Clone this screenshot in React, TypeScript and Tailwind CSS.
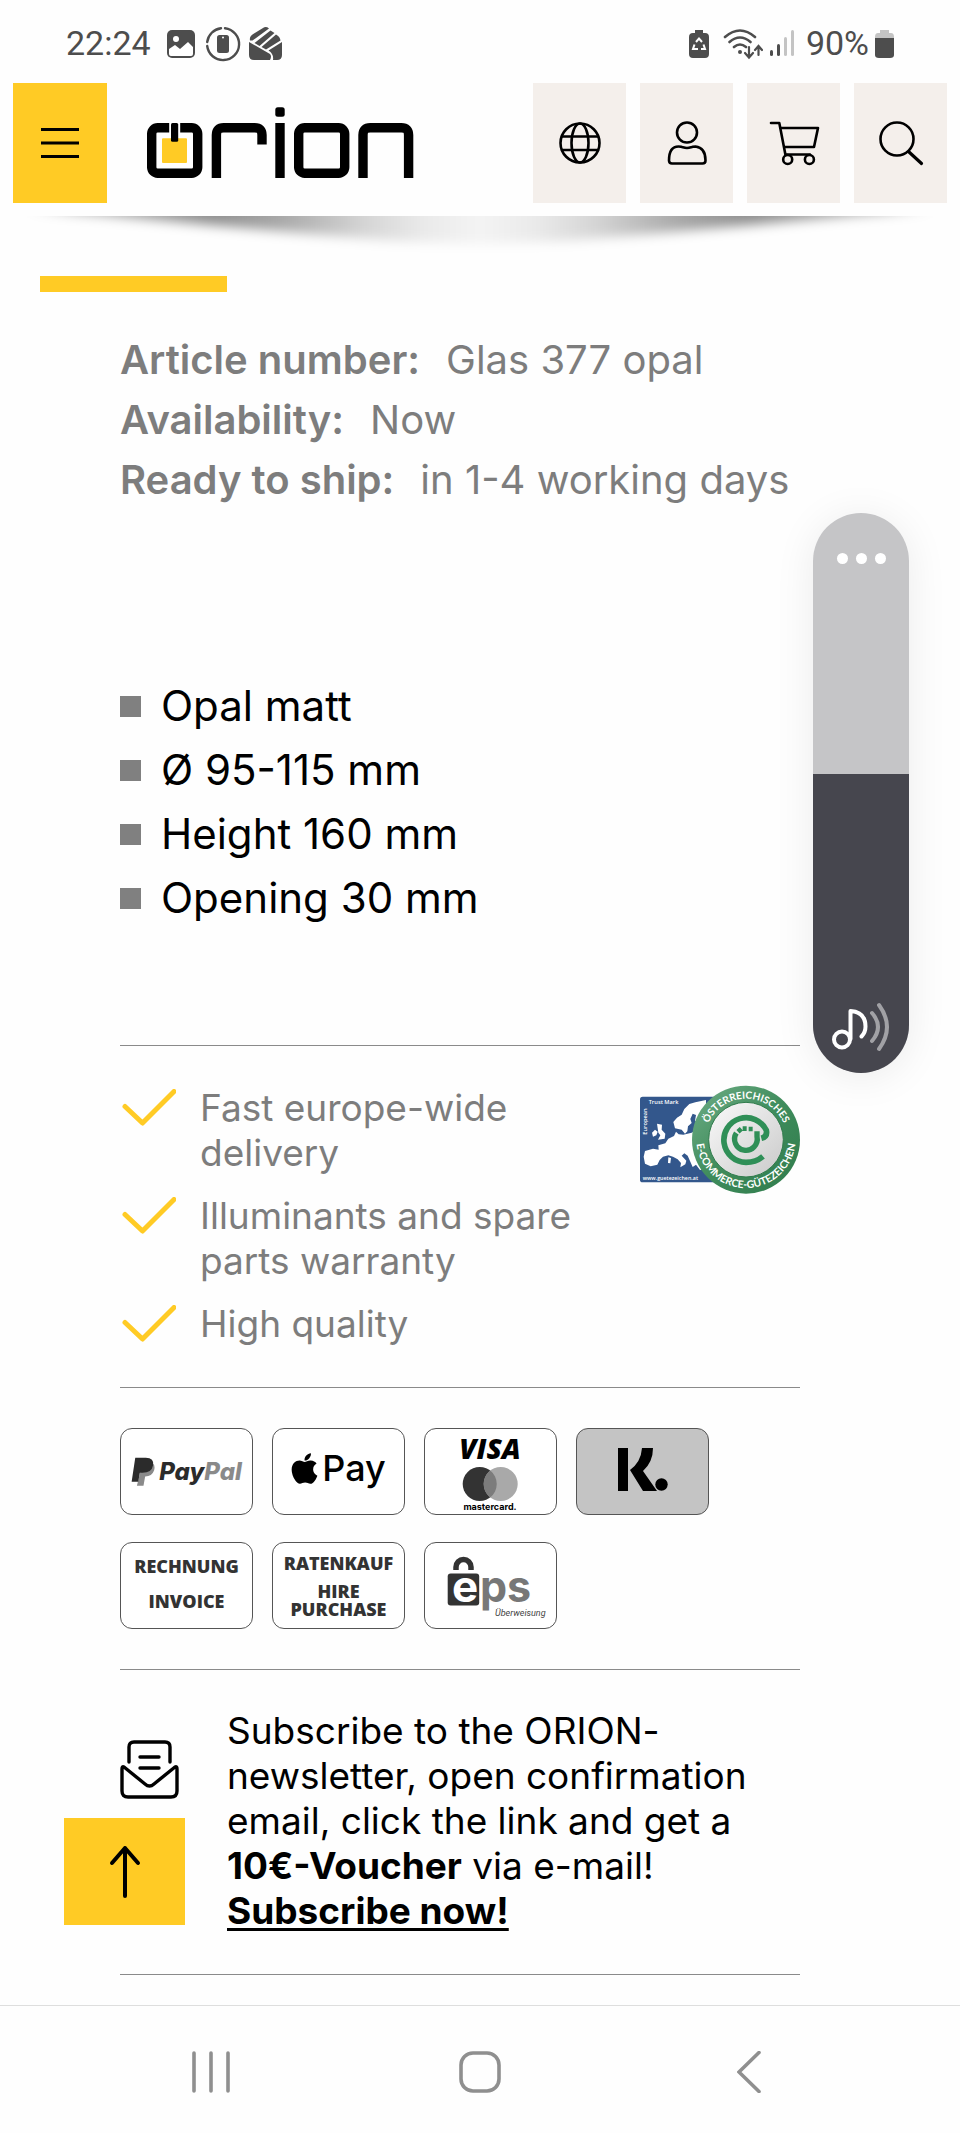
import type { ReactNode } from 'react';
import { FaApple } from 'react-icons/fa';

const articleInfo = [
  { label: 'Article number:', value: 'Glas 377 opal' },
  { label: 'Availability:', value: 'Now' },
  { label: 'Ready to ship:', value: 'in 1-4 working days' },
];

const features = ['Opal matt', 'Ø 95-115 mm', 'Height 160 mm', 'Opening 30 mm'];

const benefits = ['Fast europe-wide delivery', 'Illuminants and spare parts warranty', 'High quality'];

function StatusBar() {
  return (
    <div className="flex h-[83px] items-center justify-between pt-1 pr-[66px] pl-[66px] font-[Roboto] text-[34px] text-[#4d4d4d]">
      <div className="flex items-center gap-2">
        <span className="mr-2">22:24</span>
        <svg width="28" height="28" viewBox="0 0 28 28">
          <rect width="28" height="28" rx="5" fill="#4d4d4d" />
          <circle cx="9" cy="9" r="3" fill="#fff" />
          <path d="M2 19l6-4 5 4 8-7 5 5v7a2 2 0 0 1-2 2H4a2 2 0 0 1-2-2z" fill="#fff" />
        </svg>
        <svg className="ml-0.5" width="36" height="36" viewBox="0 0 36 36" fill="none" stroke="#4d4d4d" strokeWidth="2.4" strokeLinecap="round">
          <path d="M20 2.200A16 16 0 1 1 2.200 20M2.200 16A16 16 0 0 1 16 2.200" />
          <rect x="12" y="9" width="12" height="18" rx="2.500" fill="#4d4d4d" stroke="none" />
          <circle cx="18" cy="11.500" r="1" fill="#fff" stroke="none" />
        </svg>
        <svg width="33" height="33" viewBox="0 0 33 33" fill="#4d4d4d">
          <path d="M1 13.500Q0 9 5 6.500L14 1q3-2 6 .5L3.500 13.500zM5.500 16 21.500 3.500l4 2.500L10.500 19zM12.500 20 27 7.500q4 2 4.500 6L17 22.500z" />
          <path d="M0 15 21 27q2 2 0 6H5q-5 0-5-5zM19.500 23.500 33 15v13q0 5-5 5h-4q1-6-4.500-9.500z" />
        </svg>
      </div>
      <div className="flex items-center">
        <svg width="20" height="28" viewBox="0 0 20 28">
          <path d="M6 0h8v3h2q4 0 4 4v17q0 4-4 4H4q-4 0-4-4V7q0-4 4-4h2z" fill="#4d4d4d" />
          <path d="M7 12l3-3.500 3 3.500M14.500 14.500l1.500 4.500h-4M9 19H4l1.500-4.500" fill="none" stroke="#fff" strokeWidth="2" />
        </svg>
        <svg className="ml-[14px]" width="40" height="32" viewBox="0 0 40 32" fill="none" stroke="#4d4d4d" strokeWidth="2.600" strokeLinecap="round">
          <path d="M2 9q15-13 30 0M6.500 14q10.500-9 21 0M11 19q6-5 12 0" />
          <circle cx="17" cy="24" r="2" fill="#4d4d4d" stroke="none" />
          <path d="M26 19v10m-4-4 4 4.500 4-4.500M35.500 27V18m-3.500 4 3.500-4 3.500 4" strokeWidth="2.200" />
        </svg>
        <svg className="ml-[7px]" width="24" height="28" viewBox="0 0 24 28">
          <rect x="0" y="20" width="3" height="6" rx="1.500" fill="#4d4d4d" />
          <rect x="7" y="14" width="3" height="12" rx="1.500" fill="#4d4d4d" />
          <rect x="14" y="7" width="3" height="19" rx="1.500" fill="#c4c4c4" />
          <rect x="21" y="0" width="3" height="26" rx="1.500" fill="#c4c4c4" />
        </svg>
        <span className="ml-3">90%</span>
        <svg className="ml-[6px]" width="19" height="28" viewBox="0 0 19 28">
          <path d="M5 0h9v3h2q3 0 3 4v3H0V7q0-4 3-4h2z" fill="#c4c4c4" />
          <path d="M0 8h19v17q0 3-4 3H4q-4 0-4-3z" fill="#4d4d4d" />
        </svg>
      </div>
    </div>
  );
}

function HeaderButton({ label, children }: { label: string; children: ReactNode }) {
  return (
    <button aria-label={label} className="flex h-[120px] w-[93px] items-center justify-center bg-[#f4efeb]">
      <svg width="56" height="56" viewBox="0 0 56 56" fill="none" stroke="#000" strokeWidth="2.600" strokeLinecap="round" strokeLinejoin="round">
        {children}
      </svg>
    </button>
  );
}

function Logo() {
  return (
    <svg width="267" height="71" viewBox="147 107 267 71" fill="none" stroke="#000" strokeWidth="9.400" role="img" aria-label="orion">
      <rect x="151.700" y="127.700" width="46" height="45.600" rx="6" />
      <path d="M216.400 178V135q0-7.300 7.300-7.300h31q7.300 0 7.300 7.300v9.500" />
      <path d="M280 123v55" />
      <rect x="275.300" y="107.300" width="9.400" height="9.400" rx="2.500" fill="#000" stroke="none" />
      <rect x="298.700" y="127.700" width="46" height="45.600" rx="6" />
      <path d="M363 178V135q0-7.300 7.300-7.300h31q7.300 0 7.300 7.300v43" />
      <rect x="169.200" y="122" width="11" height="18" fill="#fff" stroke="none" />
      <rect x="162" y="138.300" width="25" height="24.700" rx="1" fill="#ffcb25" stroke="none" />
      <rect x="171" y="123" width="7.200" height="18.700" rx="1.500" fill="#000" stroke="none" />
    </svg>
  );
}

function Header() {
  return (
    <header className="relative flex items-center px-[13px] pb-[13px]">
      <button aria-label="Menu" className="flex h-[120px] w-[94px] items-center justify-center bg-[#ffcb25]">
        <svg width="38" height="30" viewBox="0 0 38 30" stroke="#000" strokeWidth="3">
          <path d="M0 1.500h38M0 15h38M0 28.500h38" />
        </svg>
      </button>
      <a href="#" className="ml-10 pb-0.5">
        <Logo />
      </a>
      <div className="ml-auto flex gap-[14px]">
        <HeaderButton label="Language">
          <circle cx="28" cy="28" r="19.500" />
          <ellipse cx="28" cy="28" rx="8.500" ry="19.500" />
          <path d="M10 21.500h36M10 35h36" />
        </HeaderButton>
        <HeaderButton label="Account">
          <circle cx="28" cy="17.500" r="10" />
          <path d="M13 48.500q-3 0-3-3 0-14 9.500-14 3 0 4.500.8 4 1.400 8 0 1.500-.8 4.500-.8 10 1 10 14 0 3-3 3z" />
        </HeaderButton>
        <HeaderButton label="Cart">
          <path d="M5 8h8.300L19.500 40" />
          <path d="M14.500 13H52l-4 19H18.500M20 39.500h24" />
          <circle cx="21.700" cy="44.500" r="4.500" />
          <circle cx="43.400" cy="44.500" r="4.500" />
        </HeaderButton>
        <HeaderButton label="Search">
          <circle cx="24" cy="24" r="16.500" />
          <path d="M36 37l12.500 11.500" strokeWidth="3.200" />
        </HeaderButton>
      </div>
      {/* Curved drop shadow under the header */}
      <svg className="absolute top-full left-0 w-full" height="50" viewBox="0 0 960 50" preserveAspectRatio="none">
        <defs>
          <linearGradient id="shade" gradientUnits="userSpaceOnUse" x1="0" x2="960" y1="0" y2="0">
            <stop offset="0.030" stopColor="#000" stopOpacity="0" />
            <stop offset="0.080" stopColor="#000" stopOpacity="0.300" />
            <stop offset="0.220" stopColor="#000" stopOpacity="0.440" />
            <stop offset="0.290" stopColor="#000" stopOpacity="0.340" />
            <stop offset="0.380" stopColor="#000" stopOpacity="0.160" />
            <stop offset="0.440" stopColor="#000" stopOpacity="0.080" />
            <stop offset="0.500" stopColor="#000" stopOpacity="0.040" />
            <stop offset="0.560" stopColor="#000" stopOpacity="0.080" />
            <stop offset="0.620" stopColor="#000" stopOpacity="0.160" />
            <stop offset="0.710" stopColor="#000" stopOpacity="0.340" />
            <stop offset="0.780" stopColor="#000" stopOpacity="0.440" />
            <stop offset="0.920" stopColor="#000" stopOpacity="0.300" />
            <stop offset="0.970" stopColor="#000" stopOpacity="0" />
          </linearGradient>
          <filter id="soft" x="0" y="-1" width="1" height="3">
            <feGaussianBlur stdDeviation="8 6" />
          </filter>
        </defs>
        <path d="M20 -16 20 -6 100 -1 200 8 300 17 400 25 480 28 560 25 660 17 760 8 860 -1 940 -6 940 -16z" fill="url(#shade)" filter="url(#soft)" />
      </svg>
    </header>
  );
}

function VolumeSlider() {
  return (
    <div className="absolute top-[513px] right-[51px] flex h-[560px] w-24 flex-col overflow-hidden rounded-full bg-[#c5c5c7] shadow-[0_4px_40px_rgba(0,0,0,0.08)]">
      <div className="flex h-[261px] justify-center gap-2 pt-10">
        <span className="size-[11px] rounded-full bg-white" />
        <span className="size-[11px] rounded-full bg-white" />
        <span className="size-[11px] rounded-full bg-white" />
      </div>
      <div className="flex flex-1 items-end justify-center bg-[#46464e] pb-5">
        <svg width="60" height="52" viewBox="0 0 60 52" fill="none" stroke="#fff" strokeWidth="4" strokeLinecap="round">
          <ellipse cx="11" cy="38.500" rx="8" ry="8" />
          <path d="M19.500 38V10q15 1 15 15.500 0 6-4 10" strokeLinejoin="round" />
          <path d="M41 12q12 14 0 28M48 4q16 22 0 44" stroke="#a1a1a5" />
        </svg>
      </div>
      <input type="range" aria-label="Volume" defaultValue={54} className="absolute inset-0 h-full w-full opacity-0 [writing-mode:vertical-lr]" />
    </div>
  );
}

function TrustBadge() {
  return (
    <svg className="shrink-0" width="160" height="110" viewBox="60 47 480 330" role="img" aria-label="Trust mark">
      <defs>
        <linearGradient id="ring" x1="0" y1="0" x2="1" y2="1">
          <stop offset="0" stopColor="#6fae86" />
          <stop offset="0.500" stopColor="#3f8c5c" />
          <stop offset="1" stopColor="#2f7b4b" />
        </linearGradient>
        <linearGradient id="disc" x1="0" y1="0" x2="1" y2="1">
          <stop offset="0" stopColor="#fafafa" />
          <stop offset="1" stopColor="#c9c9c9" />
        </linearGradient>
        <path id="arcTop" d="M255 211A123 123 0 0 1 501 211" />
        <path id="arcBottom" d="M230 190A149 149 0 1 0 526 190" />
      </defs>
      <rect x="60" y="82" width="260" height="257" rx="8" fill="#33578c" />
      <g fill="#fff">
        <path d="M185 181 165 177 160 158 171 145 185 136 193 119 208 104 226 99 258 92 258 170 238 176 238 163 225 154 228 137 218 133 211 149 215 161 204 171 202 186 195 193z" />
        <path d="M75 245 99 238 116 241 115 228 136 222 145 208 162 200 168 187 176 195 190 196 215 190 238 176 262 178 262 300 240 302 228 286 218 293 210 275 203 259 193 252 185 259 199 274 196 285 181 294 183 281 173 270 159 262 145 258 129 262 119 272 112 286 92 291 75 283 71 262z" />
        <path d="M111 163 126 166 125 181 136 193 134 208 114 211 121 198 115 190zM105 181 113 187 109 198 99 202 96 190zM145 264 153 266 151 282 144 281z" />
        <text x="86" y="105" fontFamily="Open Sans" fontWeight="600" fontSize="17">Trust Mark</text>
        <text transform="translate(80 196) rotate(-90)" fontFamily="Open Sans" fontWeight="600" fontSize="17">European</text>
        <text x="68" y="333" fontFamily="Open Sans" fontWeight="600" fontSize="16">www.guetezeichen.at</text>
      </g>
      <circle cx="378" cy="211" r="162" fill="url(#ring)" />
      <circle cx="378" cy="211" r="112" fill="url(#disc)" stroke="#2f7b4b" strokeWidth="3" />
      <g fontFamily="Lato" fontWeight="700" fill="#fff">
        <text fontSize="30">
          <textPath href="#arcTop" startOffset="50%" textAnchor="middle">ÖSTERREICHISCHES</textPath>
        </text>
        <text fontSize="31">
          <textPath href="#arcBottom" startOffset="50%" textAnchor="middle">E-COMMERCE-GÜTEZEICHEN</textPath>
        </text>
      </g>
      <g fill="none" stroke="#2f8f57">
        <path d="M429 261Q408 279 378 279A67 67 0 1 1 439 183Q443 202 424 207" strokeWidth="17" />
        <path d="M349 191A34 34 0 1 0 411 202V186" strokeWidth="16" />
        <path d="M354 187l10-9M368 178h12M386 179h12" strokeWidth="14" />
      </g>
    </svg>
  );
}

function PaymentCard({ className = 'bg-white', children }: { className?: string; children: ReactNode }) {
  return <li className={`flex h-[87px] w-[133px] items-center justify-center rounded-xl border border-[#555] ${className}`}>{children}</li>;
}

function Payments() {
  return (
    <ul className="flex flex-wrap gap-x-[19px] gap-y-[27px] border-t border-[#8a8a8a] py-10 text-[#333]">
      <PaymentCard className="gap-1 bg-white">
        <svg width="24" height="29" viewBox="65 141 71 88" aria-hidden="true">
          <path d="M100 157h28q11 10 6 25-6 18-27 18l-5 28H82z" fill="#8a8a8a" />
          <path d="M77 143h32q26 0 22 23-4 23-32 23h-8l-5 27H66z" fill="#2b2b2b" />
        </svg>
        <span className="font-[Inter] text-[24px] leading-none font-extrabold text-[#2b2b2b] italic">
          Pay<span className="text-[#8a8a8a]">Pal</span>
        </span>
      </PaymentCard>
      <PaymentCard className="gap-1 bg-white pb-[7px] text-black">
        <FaApple className="h-[35px] w-[27px]" />
        <span className="font-[Inter] text-[36px] leading-none font-medium">Pay</span>
      </PaymentCard>
      <PaymentCard>
        <svg width="131" height="85" viewBox="1 1 131 85">
          <text x="66" y="31" textAnchor="middle" fontFamily="Open Sans" fontWeight="800" fontStyle="italic" fontSize="28" fill="#000">VISA</text>
          <circle cx="55.700" cy="56" r="17" fill="#333" />
          <circle cx="76.700" cy="56" r="17" fill="#a9a9a9" />
          <path d="M66.200 42.600a17 17 0 0 1 0 26.800 17 17 0 0 1 0-26.800z" fill="#7c7c7c" />
          <text x="66" y="82" textAnchor="middle" fontFamily="Inter" fontWeight="700" fontSize="9" fill="#000">mastercard.</text>
        </svg>
      </PaymentCard>
      <PaymentCard className="bg-[#c4c4c4] pb-1">
        <svg width="50" height="44" viewBox="0 0 50 44" role="img" aria-label="Klarna">
          <rect x="0" y="0" width="10" height="43" />
          <path d="M24 0h11q0 14-10 23l14 20H25L12 22Q23 14 24 0z" />
          <circle cx="43.500" cy="36.500" r="6.200" />
        </svg>
      </PaymentCard>
      <PaymentCard className="flex-col gap-[17px] bg-white pb-1 font-['Open_Sans'] text-[18px] leading-[18px] font-extrabold">
        <span>RECHNUNG</span>
        <span>INVOICE</span>
      </PaymentCard>
      <PaymentCard className="flex-col gap-[10px] bg-white text-center font-['Open_Sans'] text-[18px] leading-[18px] font-extrabold">
        <span>RATENKAUF</span>
        <span>
          HIRE
          <br />
          PURCHASE
        </span>
      </PaymentCard>
      <PaymentCard>
        <svg width="131" height="85" viewBox="1 1 131 85">
          <path d="M32 28V25a7.500 7.500 0 0 1 15 0v3" fill="none" stroke="#333" strokeWidth="5.500" />
          <rect x="23.700" y="31.500" width="31.500" height="32" rx="3" fill="#333" />
          <text x="28" y="60" fontFamily="Inter" fontWeight="700" fontSize="44" fill="#fff">e</text>
          <text x="56" y="60" fontFamily="Inter" fontWeight="700" fontSize="43" fill="#777">ps</text>
          <text x="71" y="74" fontFamily="Roboto" fontStyle="italic" fontSize="9" fill="#444">Überweisung</text>
        </svg>
      </PaymentCard>
    </ul>
  );
}

function BottomNav() {
  return (
    <nav className="grid h-[128px] grid-cols-3 border-t border-[#dedede] px-[76px] pb-7">
      <button aria-label="Recent apps" className="flex items-end justify-center pb-3">
        <svg width="38" height="42" viewBox="0 0 38 42" stroke="#8f8f8f" strokeWidth="3.600" strokeLinecap="round">
          <path d="M2 2v38M19 2v38M36 2v38" />
        </svg>
      </button>
      <button aria-label="Home" className="flex items-end justify-center pb-3">
        <svg width="42" height="42" viewBox="0 0 42 42" fill="none" stroke="#8f8f8f" strokeWidth="3.600">
          <rect x="2" y="2" width="38" height="38" rx="12" />
        </svg>
      </button>
      <button aria-label="Back" className="flex items-end justify-center pb-3">
        <svg width="24" height="42" viewBox="0 0 24 42" fill="none" stroke="#8f8f8f" strokeWidth="3.600" strokeLinecap="round">
          <path d="M22 1.500 2 21l20 19.500" />
        </svg>
      </button>
    </nav>
  );
}

export default function App() {
  return (
    <div className="relative bg-[#fefefe] font-[Inter,sans-serif] text-black">
      <StatusBar />
      <Header />

      <main className="relative pt-[60px] pb-[30px]">
        <div className="ml-10 h-4 w-[187px] bg-[#ffcb25]" />

        <div className="mr-40 ml-[120px]">
          <dl className="mt-[38px] text-[40px] leading-[60px] text-[#7d7d7d]">
            {articleInfo.map((row) => (
              <div key={row.label} className="-mr-10 flex gap-[26px]">
                <dt className="font-semibold">{row.label}</dt>
                <dd>{row.value}</dd>
              </div>
            ))}
          </dl>

          <ul className="mt-[164px] mb-[115px] text-[42px] leading-[64px]">
            {features.map((item) => (
              <li key={item} className="flex items-center gap-5">
                <span className="size-[21px] bg-[#808080]" />
                {item}
              </li>
            ))}
          </ul>

          <section className="flex items-start gap-10 border-t border-[#8a8a8a] pt-[39px] pb-[41px]">
            <ul className="flex flex-1 flex-col gap-[18px] text-[37px] leading-[45px] text-[#7d7d7d]">
              {benefits.map((item) => (
                <li key={item} className="flex items-start gap-6">
                  <svg className="mt-1 shrink-0" width="56" height="38" viewBox="0 0 56 38" fill="none" stroke="#ffcb25" strokeWidth="5" strokeLinecap="round" strokeLinejoin="round">
                    <path d="M5 17.500 22.500 34 54 2.500" />
                  </svg>
                  {item}
                </li>
              ))}
            </ul>
            <TrustBadge />
          </section>

          <Payments />

          <section className="flex items-start gap-12 border-y border-[#8a8a8a] pt-[38px] pb-[41px]">
            <svg className="mt-8 shrink-0" width="59" height="59" viewBox="0 0 59 59" fill="none" stroke="#000" strokeWidth="3.400" strokeLinecap="round" strokeLinejoin="round">
              <path d="M9 22V7q0-5 5-5h31q5 0 5 5v15M20 17h19M20 28h19" />
              <path d="M4 27 25 44q4.500 4 9 0L55 27q2-1 2 2v22q0 6-6 6H8q-6 0-6-6V29q0-3 2-2z" />
            </svg>
            <p className="text-[37px] leading-[45px]">
              Subscribe to the ORION-newsletter, open confirmation email, click the link and get a <strong>10€-Voucher</strong> via e-mail!{' '}
              <a href="#" className="font-bold underline decoration-[3px] underline-offset-4">
                Subscribe now!
              </a>
            </p>
          </section>
        </div>

        <button aria-label="Back to top" className="absolute bottom-20 left-16 flex h-[107px] w-[121px] items-center justify-center bg-[#ffcb25]">
          <svg width="32" height="54" viewBox="0 0 32 54" fill="none" stroke="#000" strokeWidth="4" strokeLinecap="round" strokeLinejoin="round">
            <path d="M16 51V3M3 18 16 3l13 15" />
          </svg>
        </button>
      </main>

      <BottomNav />
      <VolumeSlider />
    </div>
  );
}
